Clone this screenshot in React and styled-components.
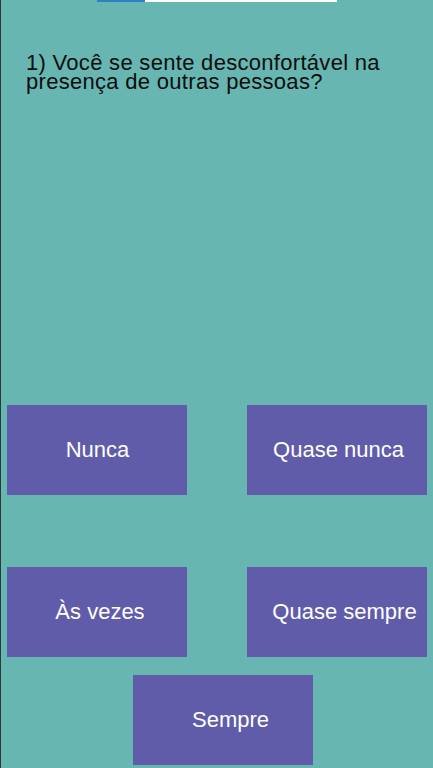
import React from "react";
import styled, { createGlobalStyle } from "styled-components";

const GlobalStyle = createGlobalStyle`
  html, body {
    margin: 0;
    padding: 0;
    background: #67b6b1;
  }
  * {
    box-sizing: border-box;
  }
`;

const Screen = styled.div`
  min-height: 768px;
  width: 433px;
  display: flex;
  flex-direction: column;
  background: #67b6b1;
  border-left: 1px solid #2b3a39;
  font-family: "Liberation Sans", Arial, sans-serif;
  overflow: hidden;
`;

const ProgressTrack = styled.div`
  width: 240px;
  height: 2px;
  margin: 0 0 0 96px;
  background: #ffffff;
  display: flex;
`;

const ProgressFill = styled.div`
  height: 100%;
  background: #2f80c4;
`;

const Question = styled.h1`
  margin: 51px 0 0;
  padding: 0 20px 0 25px;
  font-size: 22px;
  font-weight: normal;
  line-height: 19px;
  letter-spacing: 0.3px;
  color: #0d0d0d;
  min-height: 352px;
`;

const Options = styled.div`
  display: grid;
  grid-template-columns: 180px 180px;
  column-gap: 60px;
  row-gap: 72px;
  padding-left: 6px;
`;

const LastRow = styled.div`
  display: flex;
  padding-left: 132px;
  margin-top: 18px;
`;

const Option = styled.button`
  width: 180px;
  height: 90px;
  border: none;
  border-radius: 0;
  background: #615ca9;
  color: #ffffff;
  font-family: "Liberation Sans", Arial, sans-serif;
  font-size: 22px;
  display: flex;
  align-items: center;
  justify-content: center;
  padding: 0 0 0 ${({ $shift }) => $shift || 0}px;
  cursor: pointer;
  white-space: nowrap;
`;

const answers = [
  { label: "Nunca", shift: 1 },
  { label: "Quase nunca", shift: 3 },
  { label: "Às vezes", shift: 6 },
  { label: "Quase sempre", shift: 15 },
];

export default function App() {
  return (
    <>
      <GlobalStyle />
      <Screen>
        <ProgressTrack>
          <ProgressFill style={{ width: `${(1 / 5) * 100}%` }} />
        </ProgressTrack>
        <Question>
          1) Você se sente desconfortável na presença de outras pessoas?
        </Question>
        <Options>
          {answers.map((a) => (
            <Option key={a.label} $shift={a.shift}>
              {a.label}
            </Option>
          ))}
        </Options>
        <LastRow>
          <Option $shift={15}>Sempre</Option>
        </LastRow>
      </Screen>
    </>
  );
}
